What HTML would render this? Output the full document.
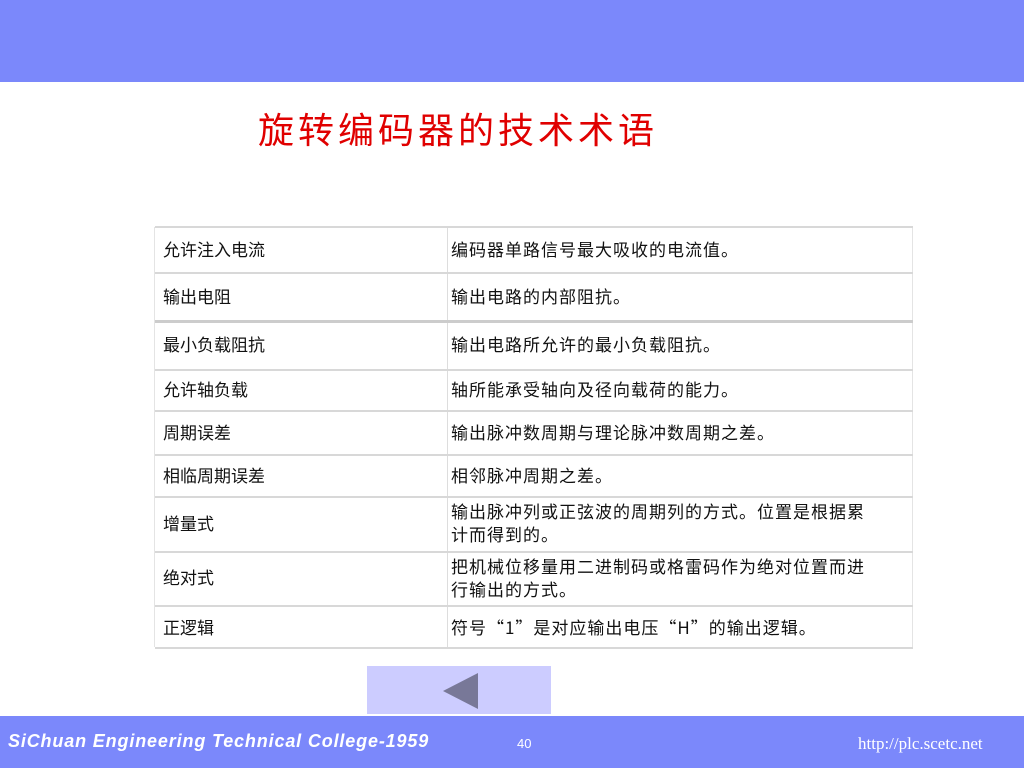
<!DOCTYPE html>
<html><head><meta charset="utf-8"><style>
body{margin:0;width:1024px;height:768px;position:relative;background:#fff;overflow:hidden;font-family:"Liberation Sans","Noto Sans CJK SC",sans-serif}
.hdr{position:absolute;left:0;top:0;width:1024px;height:82px;background:#7b88fb}
.ftr{position:absolute;left:0;top:716px;width:1024px;height:52px;background:#7b88fb}
.title{position:absolute;left:258px;top:104px;font-size:36px;line-height:48px;color:#e00000;font-family:"Noto Sans CJK SC",sans-serif;letter-spacing:4px;white-space:nowrap}
.row{position:absolute;left:155px;width:758px;border-top:2px solid #d8d8d8;font-size:17px;line-height:23px;color:#111;font-family:"Noto Sans CJK SC",sans-serif}
.row .a{position:absolute;left:8px}
.row .b{position:absolute;left:296px;width:458px;letter-spacing:1px;white-space:nowrap}
.vl{position:absolute;left:447px;top:227px;width:1px;height:420px;background:#ddd}
.vl2{position:absolute;left:154px;top:227px;width:1px;height:420px;background:#e4e4e4}
.vl3{position:absolute;left:912px;top:227px;width:1px;height:420px;background:#e4e4e4}
</style></head><body>
<div class="hdr"></div>
<div class="title">旋转编码器的技术术语</div>
<div class="vl"></div><div class="vl2"></div><div class="vl3"></div>
<div class="row" style="top:226px;height:46px"><span class="a" style="top:9px">允许注入电流</span><span class="b" style="top:9px">编码器单路信号最大吸收的电流值。</span></div>
<div class="row" style="top:272px;height:48px"><span class="a" style="top:10px">输出电阻</span><span class="b" style="top:10px">输出电路的内部阻抗。</span></div>
<div class="row" style="top:320px;height:49px;border-top:3px solid #ccc"><span class="a" style="top:9px">最小负载阻抗</span><span class="b" style="top:9px">输出电路所允许的最小负载阻抗。</span></div>
<div class="row" style="top:369px;height:41px"><span class="a" style="top:6px">允许轴负载</span><span class="b" style="top:6px">轴所能承受轴向及径向载荷的能力。</span></div>
<div class="row" style="top:410px;height:44px"><span class="a" style="top:8px">周期误差</span><span class="b" style="top:8px">输出脉冲数周期与理论脉冲数周期之差。</span></div>
<div class="row" style="top:454px;height:42px"><span class="a" style="top:7px">相临周期误差</span><span class="b" style="top:7px">相邻脉冲周期之差。</span></div>
<div class="row" style="top:496px;height:55px"><span class="a" style="top:13px">增量式</span><span class="b" style="top:1px">输出脉冲列或正弦波的周期列的方式。位置是根据累<br>计而得到的。</span></div>
<div class="row" style="top:551px;height:54px"><span class="a" style="top:12px">绝对式</span><span class="b" style="top:1px">把机械位移量用二进制码或格雷码作为绝对位置而进<br>行输出的方式。</span></div>
<div class="row" style="top:605px;height:40px;border-bottom:2px solid #d8d8d8"><span class="a" style="top:8px">正逻辑</span><span class="b" style="top:8px">符号“1”是对应输出电压“H”的输出逻辑。</span></div>
<div style="position:absolute;left:367px;top:666px;width:184px;height:48px;background:#ccccff"></div>
<svg style="position:absolute;left:440px;top:672px" width="40" height="38"><polygon points="3,19 38,1 38,37" fill="#787898"/></svg>
<div class="ftr">
<span style="position:absolute;left:8px;top:15px;font-size:18px;font-weight:bold;font-style:italic;color:#fff;letter-spacing:0.85px">SiChuan Engineering Technical College-1959</span>
<span style="position:absolute;left:517px;top:20px;font-size:13px;color:#fff">40</span>
<span style="position:absolute;left:858px;top:18px;font-size:17px;color:#fff;font-family:'Liberation Serif',serif">http://plc.scetc.net</span>
</div>
</body></html>
